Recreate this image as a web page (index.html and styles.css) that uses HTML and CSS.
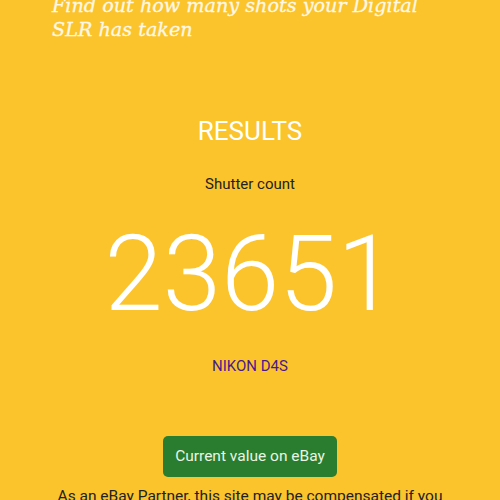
FILE: index.html
```html
<!DOCTYPE html>
<html lang="en">
<head>
  <meta charset="UTF-8">
  <title>Shutter Count</title>
  <link rel="stylesheet" href="styles.css">
</head>
<body>
  <header class="intro">
    <h2 class="tagline">Find out how many shots your Digital SLR has taken</h2>
  </header>

  <section class="results">
    <h1 class="results-title">RESULTS</h1>
    <p class="label">Shutter count</p>
    <div class="count">23651</div>
    <p class="model">NIKON D4S</p>
    <a class="ebay-button" href="#">Current value on eBay</a>
    <p class="disclaimer">As an eBay Partner, this site may be compensated if you make a purchase.</p>
  </section>
</body>
</html>
```

FILE: styles.css
```css
body {
  margin: 0;
  background-color: #fcc42c;
  font-family: Roboto, "Noto Sans", sans-serif;
  color: #222;
  overflow: hidden;
}
.intro {
  margin-top: -6px;
  padding: 0 52px;
}
.tagline {
  margin: 0;
  font-family: "DejaVu Serif", serif;
  font-style: italic;
  font-weight: normal;
  font-size: 19.2px;
  line-height: 24px;
  color: #fff8e6;
  -webkit-text-stroke: 0.3px #fff8e6;
}
.results {
  text-align: center;
  padding-top: 69px;
}
.results-title {
  margin: 0;
  font-size: 26px;
  font-weight: 400;
  color: #fff;
  line-height: 40px;
}
.label {
  margin: 22px 0 0;
  font-size: 15px;
  line-height: 22px;
}
.count {
  margin-top: 20px;
  font-size: 105px;
  font-weight: 300;
  color: #fff;
  line-height: 120px;
}
.model {
  margin: 20px 0 0;
  font-size: 15px;
  color: #4a1a8c;
  line-height: 22px;
}
.ebay-button {
  display: inline-block;
  margin-top: 59px;
  padding: 0 12px;
  height: 41px;
  line-height: 41px;
  border-radius: 5px;
  background-color: #2a7d2f;
  color: #e8f5e4;
  font-size: 15.5px;
  text-decoration: none;
}
.disclaimer {
  margin: 8px auto 0;
  width: 400px;
  font-size: 15.5px;
  line-height: 22px;
}
```
